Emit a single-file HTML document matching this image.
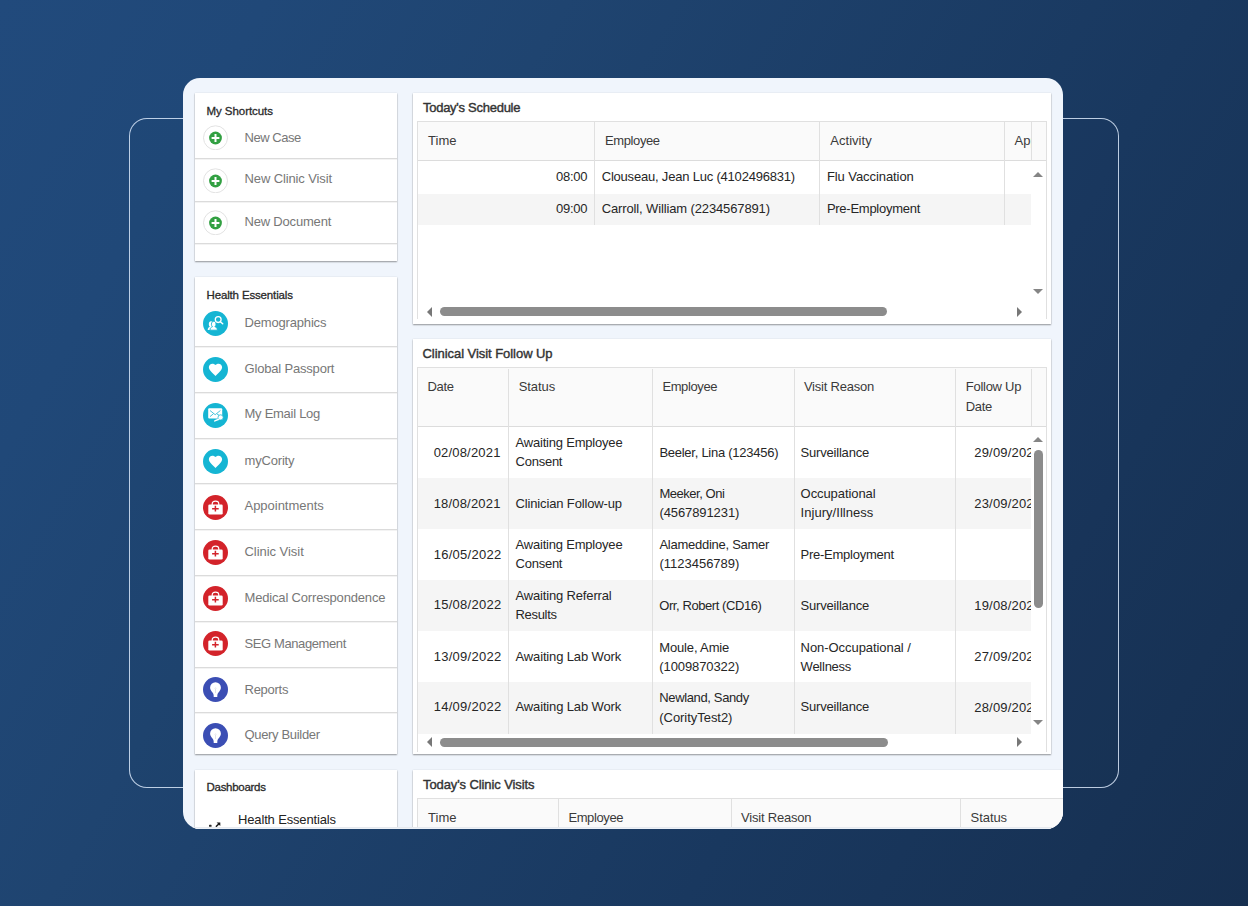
<!DOCTYPE html>
<html lang="en">
<head>
<meta charset="utf-8">
<title>Health Essentials Dashboard</title>
<style>
*{box-sizing:border-box;margin:0;padding:0}
html,body{width:1248px;height:906px;overflow:hidden}
body{position:relative;font-family:"Liberation Sans",sans-serif;font-size:13px;color:#2b2b2b;
background:linear-gradient(120deg,#214a7c 0%,#204878 15%,#1f4470 32%,#19385f 68%,#162f50 100%);}
.frame{position:absolute;left:128.8px;top:118.2px;width:990.2px;height:669.5px;border:1.4px solid rgba(225,238,255,.82);border-radius:18px;background:rgba(20,40,80,.04)}
.card{position:absolute;left:0;top:0;width:1248px;height:906px;clip-path:inset(78px 185px 77px 183px round 17px);}
.cardbg{position:absolute;left:183px;top:78px;width:880px;height:751px;background:#f0f5fc}
.panel{position:absolute;background:#fff;box-shadow:0 1px 1.5px rgba(0,0,0,.38),0 0 1.5px rgba(0,0,0,.1)}
.t{position:absolute;white-space:nowrap;line-height:16px;height:16px}
.h{font-size:11.5px;color:#2a2a2a;-webkit-text-stroke:.3px #2a2a2a}
.pt{font-size:13px;color:#333;-webkit-text-stroke:.4px #333}
.it{color:#777;font-size:13px}
.sep{position:absolute;left:195px;width:202px;height:1px;background:#dbdbdb;box-shadow:0 1px 0 #f3f3f3}
.ic{position:absolute;left:203px;width:25px;height:25px}
.grid{position:absolute;background:#fff;border:1px solid #e0e0e0;border-bottom:none}
.gh{position:absolute;background:#fafafa}
.hl{position:absolute;height:1px;background:#dcdcdc}
.vl{position:absolute;width:1px;background:#e0e0e0}
.row{position:absolute;background:#f5f5f5}
.c{color:#262626;font-size:13px}
.hd{color:#3a3a3a;font-size:13px}
.clip{position:absolute;overflow:hidden}
.thumb{position:absolute;background:#8c8c8c;border-radius:5px}
.ar{position:absolute;width:0;height:0;border:5px solid transparent}
</style>
</head>
<body>
<div class="frame"></div>
<div class="card">
<div class="cardbg"></div>

<!-- ================= My Shortcuts ================= -->
<div class="panel" style="left:195px;top:93px;width:202px;height:168px"></div>
<div class="t h" style="left:206.5px;top:102.5px;letter-spacing:-0.06px">My Shortcuts</div>
<div class="sep" style="top:157.75px"></div>
<div class="sep" style="top:201px"></div>
<div class="sep" style="top:242.75px"></div>
<svg class="ic" style="top:125px" viewBox="0 0 25 25"><circle cx="12.5" cy="12.8" r="12" fill="#fff" stroke="#e2e2e2" stroke-width="1"/><circle cx="12.5" cy="13" r="6.4" fill="#32a042"/><path d="M8.6 13h7.8M12.5 9.1v7.8" stroke="#fff" stroke-width="2" fill="none"/></svg>
<svg class="ic" style="top:167.5px" viewBox="0 0 25 25"><circle cx="12.5" cy="12.8" r="12" fill="#fff" stroke="#e2e2e2" stroke-width="1"/><circle cx="12.5" cy="13" r="6.4" fill="#32a042"/><path d="M8.6 13h7.8M12.5 9.1v7.8" stroke="#fff" stroke-width="2" fill="none"/></svg>
<svg class="ic" style="top:210px" viewBox="0 0 25 25"><circle cx="12.5" cy="12.8" r="12" fill="#fff" stroke="#e2e2e2" stroke-width="1"/><circle cx="12.5" cy="13" r="6.4" fill="#32a042"/><path d="M8.6 13h7.8M12.5 9.1v7.8" stroke="#fff" stroke-width="2" fill="none"/></svg>
<div class="t it" style="left:244.5px;top:129.75px;letter-spacing:-0.46px">New Case</div>
<div class="t it" style="left:244.5px;top:171px;letter-spacing:-0.12px">New Clinic Visit</div>
<div class="t it" style="left:244.5px;top:214px;letter-spacing:-0.19px">New Document</div>

<!-- ================= Health Essentials ================= -->
<div class="panel" style="left:195px;top:277px;width:202px;height:476.5px"></div>
<div class="t h" style="left:206.5px;top:287px;letter-spacing:-0.15px">Health Essentials</div>
<div class="sep" style="top:345.75px"></div>
<div class="sep" style="top:392px"></div>
<div class="sep" style="top:437.5px"></div>
<div class="sep" style="top:482.75px"></div>
<div class="sep" style="top:528.75px"></div>
<div class="sep" style="top:575px"></div>
<div class="sep" style="top:620.75px"></div>
<div class="sep" style="top:666.5px"></div>
<div class="sep" style="top:711.5px"></div>

<!-- Demographics icon -->
<svg class="ic" style="top:311px" viewBox="0 0 25 25"><circle cx="12.5" cy="12.5" r="12.5" fill="#15b5d3"/>
<path d="M4.700 19c0-2.100 1-2.900 2.100-3.300-.6-.6-1-1.500-1-2.500 0-1.700.9-2.900 2.200-2.900s2.200 1.200 2.200 2.900v5.800z" fill="#fff"/>
<path d="M7 19.200c0-2.400 1.300-3.100 2.500-3.500-.7-.6-1.100-1.500-1.100-2.500 0-1.700 1-2.900 2.300-2.900s2.300 1.200 2.300 2.900c0 1-.4 1.900-1.100 2.500 1.200.4 2.500 1.100 2.500 3.500z" fill="#fff" stroke="#15b5d3" stroke-width=".9"/>
<circle cx="15.200" cy="8.600" r="2.900" fill="none" stroke="#fff" stroke-width="1.300"/><path d="M17.300 10.700l2.400 2.100" stroke="#fff" stroke-width="1.500" stroke-linecap="round"/></svg>
<!-- Global Passport icon -->
<svg class="ic" style="top:357px" viewBox="0 0 25 25"><circle cx="12.5" cy="12.5" r="12.5" fill="#15b5d3"/><path transform="translate(4.500 4.700) scale(.665)" d="M12 21.350l-1.450-1.320C5.400 15.360 2 12.280 2 8.500 2 5.420 4.420 3 7.500 3c1.740 0 3.410.81 4.500 2.090C13.090 3.810 14.760 3 16.500 3 19.580 3 22 5.420 22 8.500c0 3.780-3.400 6.860-8.550 11.540L12 21.350z" fill="#fff"/></svg>
<!-- My Email Log icon -->
<svg class="ic" style="top:402.500px" viewBox="0 0 25 25"><circle cx="12.5" cy="12.5" r="12.5" fill="#15b5d3"/><rect x="5.200" y="5.300" width="14" height="10.200" rx="1" fill="#fff"/><path d="M7 7.500l5.200 4.200 5.200-4.200M7 13.600l3.400-2.800M14 11l2.500 1.500" stroke="#15b5d3" stroke-width=".8" fill="none"/><circle cx="17.600" cy="14.400" r="2.600" fill="#fff" stroke="#15b5d3" stroke-width=".8"/><path d="M15.800 16.300l-4 1.600" stroke="#fff" stroke-width="1.500" stroke-linecap="round"/></svg>
<!-- myCority icon -->
<svg class="ic" style="top:448.500px" viewBox="0 0 25 25"><circle cx="12.5" cy="12.5" r="12.5" fill="#15b5d3"/><path transform="translate(4.500 4.700) scale(.665)" d="M12 21.350l-1.450-1.320C5.400 15.360 2 12.280 2 8.500 2 5.420 4.420 3 7.500 3c1.740 0 3.410.81 4.500 2.090C13.090 3.810 14.760 3 16.500 3 19.580 3 22 5.420 22 8.500c0 3.780-3.400 6.860-8.550 11.540L12 21.350z" fill="#fff"/></svg>
<!-- medical bag icons -->
<svg class="ic" style="top:494.500px" viewBox="0 0 25 25"><circle cx="12.5" cy="12.5" r="12.5" fill="#d3232a"/><path d="M9.200 10v-1a3.300 2.900 0 0 1 6.600 0v1" fill="none" stroke="#fff" stroke-width="1.200"/><rect x="5.300" y="9.400" width="14.400" height="10.100" rx="1.300" fill="#fff"/><path d="M9.100 13.700h6.600M12.400 10.800v5.800" stroke="#d3232a" stroke-width="1.500"/></svg>
<svg class="ic" style="top:539.500px" viewBox="0 0 25 25"><circle cx="12.5" cy="12.5" r="12.5" fill="#d3232a"/><path d="M9.200 10v-1a3.300 2.900 0 0 1 6.600 0v1" fill="none" stroke="#fff" stroke-width="1.200"/><rect x="5.300" y="9.400" width="14.400" height="10.100" rx="1.300" fill="#fff"/><path d="M9.100 13.700h6.600M12.400 10.800v5.800" stroke="#d3232a" stroke-width="1.500"/></svg>
<svg class="ic" style="top:585.500px" viewBox="0 0 25 25"><circle cx="12.5" cy="12.5" r="12.5" fill="#d3232a"/><path d="M9.200 10v-1a3.300 2.900 0 0 1 6.600 0v1" fill="none" stroke="#fff" stroke-width="1.200"/><rect x="5.300" y="9.400" width="14.400" height="10.100" rx="1.300" fill="#fff"/><path d="M9.100 13.700h6.600M12.400 10.800v5.800" stroke="#d3232a" stroke-width="1.500"/></svg>
<svg class="ic" style="top:631px" viewBox="0 0 25 25"><circle cx="12.5" cy="12.5" r="12.5" fill="#d3232a"/><path d="M9.200 10v-1a3.300 2.900 0 0 1 6.600 0v1" fill="none" stroke="#fff" stroke-width="1.200"/><rect x="5.300" y="9.400" width="14.400" height="10.100" rx="1.300" fill="#fff"/><path d="M9.100 13.700h6.600M12.400 10.800v5.800" stroke="#d3232a" stroke-width="1.500"/></svg>
<!-- bulb icons -->
<svg class="ic" style="top:677px" viewBox="0 0 25 25"><circle cx="12.5" cy="12.5" r="12.500" fill="#3b4eb4"/><path d="M12.500 5.200a5.400 5.400 0 0 1 5.400 5.400c0 2-1.100 3.400-2.200 4.700-.8.900-1.400 2.200-1.400 3.400v1.200h-3.600v-1.200c0-1.200-.6-2.500-1.400-3.400-1.100-1.300-2.200-2.700-2.200-4.700a5.400 5.400 0 0 1 5.400-5.400z" fill="#fff"/><path d="M11.600 11.500c.3-.7 1.500-.7 1.800 0M12.500 12v4" stroke="#d5d5dd" stroke-width=".7" fill="none"/></svg>
<svg class="ic" style="top:723px" viewBox="0 0 25 25"><circle cx="12.5" cy="12.5" r="12.500" fill="#3b4eb4"/><path d="M12.500 5.200a5.400 5.400 0 0 1 5.400 5.400c0 2-1.100 3.400-2.200 4.700-.8.900-1.400 2.200-1.400 3.400v1.200h-3.600v-1.200c0-1.200-.6-2.500-1.400-3.400-1.100-1.300-2.200-2.700-2.200-4.700a5.400 5.400 0 0 1 5.400-5.400z" fill="#fff"/><path d="M11.600 11.500c.3-.7 1.500-.7 1.800 0M12.500 12v4" stroke="#d5d5dd" stroke-width=".7" fill="none"/></svg>

<div class="t it" style="left:244.5px;top:314.5px;letter-spacing:-0.17px">Demographics</div>
<div class="t it" style="left:244.5px;top:360.5px;letter-spacing:-0.18px">Global Passport</div>
<div class="t it" style="left:244.5px;top:406.25px;letter-spacing:-0.27px">My Email Log</div>
<div class="t it" style="left:244.5px;top:452.5px;letter-spacing:-0.18px">myCority</div>
<div class="t it" style="left:244.5px;top:497.5px;letter-spacing:-0.02px">Appointments</div>
<div class="t it" style="left:244.5px;top:543.75px;letter-spacing:-0.04px">Clinic Visit</div>
<div class="t it" style="left:244.5px;top:589.5px;letter-spacing:-0.17px">Medical Correspondence</div>
<div class="t it" style="left:244.5px;top:635.5px;letter-spacing:-0.40px">SEG Management</div>
<div class="t it" style="left:244.5px;top:681.75px;letter-spacing:-0.26px">Reports</div>
<div class="t it" style="left:244.5px;top:726.75px;letter-spacing:-0.33px">Query Builder</div>

<!-- ================= Dashboards ================= -->
<div class="panel" style="left:195px;top:769.5px;width:202px;height:100px"></div>
<div class="t h" style="left:206.5px;top:779.25px;letter-spacing:-0.28px">Dashboards</div>
<div class="t" style="left:238px;top:812.25px;color:#222;font-size:13px;letter-spacing:-0.15px">Health Essentials</div>
<svg style="position:absolute;left:208px;top:820px;width:14px;height:8px" viewBox="0 0 14 8"><path d="M8.6 2.400h3.700v3.700z" fill="#1a1a1a"/><path d="M11.500 3.200l-3.600 3.600" stroke="#1a1a1a" stroke-width="1.500" fill="none"/><rect x="1" y="4.800" width="2.600" height="2" rx=".6" fill="#2a2a2a"/></svg>

<!-- ================= Today's Schedule ================= -->
<div class="panel" style="left:412.5px;top:93px;width:638.5px;height:230.500px"></div>
<div class="t pt" style="left:423px;top:100px;letter-spacing:-0.27px">Today's Schedule</div>
<div class="grid" style="left:417px;top:121px;width:629.5px;height:198px"></div>
<div class="gh" style="left:418px;top:122px;width:627.500px;height:38.500px"></div>
<div class="hl" style="left:418px;top:160px;width:627.500px"></div>
<div class="row" style="left:418px;top:193.500px;width:613px;height:31.500px"></div>
<div class="vl" style="left:594px;top:122px;height:103px"></div>
<div class="vl" style="left:819px;top:122px;height:103px"></div>
<div class="vl" style="left:1004px;top:122px;height:103px"></div>
<div class="vl" style="left:1030.500px;top:122px;height:38px"></div>
<div class="t hd" style="left:428px;top:132.750px;letter-spacing:0.03px">Time</div>
<div class="t hd" style="left:605px;top:132.750px;letter-spacing:-0.39px">Employee</div>
<div class="t hd" style="left:830.300px;top:132.750px;letter-spacing:0.03px">Activity</div>
<div class="clip" style="left:1005px;top:122px;width:25.500px;height:38px"><div class="t hd" style="left:9.500px;top:10.750px">Approved</div></div>
<div class="t c" style="left:556px;top:169px;letter-spacing:-0.24px">08:00</div>
<div class="t c" style="left:556px;top:200.750px;letter-spacing:-0.24px">09:00</div>
<div class="t c" style="left:601.700px;top:169px;letter-spacing:-0.20px">Clouseau, Jean Luc (4102496831)</div>
<div class="t c" style="left:601.700px;top:200.750px;letter-spacing:-0.13px">Carroll, William (2234567891)</div>
<div class="t c" style="left:826.900px;top:169px;letter-spacing:-0.07px">Flu Vaccination</div>
<div class="t c" style="left:826.900px;top:200.750px;letter-spacing:-0.26px">Pre-Employment</div>
<!-- scrollbars -->
<div class="ar" style="left:1033px;top:172px;border-bottom:5px solid #858585;border-top-width:0"></div>
<div class="ar" style="left:1033px;top:289px;border-top:5px solid #858585;border-bottom-width:0"></div>
<div class="ar" style="left:426.500px;top:306.500px;border-right:5px solid #777;border-left-width:0"></div>
<div class="ar" style="left:1016.500px;top:306.500px;border-left:5px solid #777;border-right-width:0"></div>
<div class="thumb" style="left:440px;top:307px;width:447px;height:9px"></div>

<!-- ================= Clinical Visit Follow Up ================= -->
<div class="panel" style="left:412.5px;top:339px;width:638.5px;height:415px"></div>
<div class="t pt" style="left:422.500px;top:345.500px;letter-spacing:-0.05px">Clinical Visit Follow Up</div>
<div class="grid" style="left:417px;top:367px;width:629.5px;height:385px"></div>
<div class="gh" style="left:418px;top:368px;width:627.500px;height:58px"></div>
<div class="hl" style="left:418px;top:425.500px;width:627.500px;height:1.500px"></div>
<div class="row" style="left:418px;top:478px;width:613px;height:51px"></div>
<div class="row" style="left:418px;top:580px;width:613px;height:51px"></div>
<div class="row" style="left:418px;top:682px;width:613px;height:51.500px"></div>
<div class="vl" style="left:507.500px;top:368.500px;height:365px"></div>
<div class="vl" style="left:651.500px;top:368.500px;height:365px"></div>
<div class="vl" style="left:793.500px;top:368.500px;height:365px"></div>
<div class="vl" style="left:955.200px;top:368.500px;height:365px"></div>
<div class="vl" style="left:1030.700px;top:368.500px;height:57px"></div>
<div class="t hd" style="left:427.500px;top:379.1px;letter-spacing:-0.32px">Date</div>
<div class="t hd" style="left:518.700px;top:379.1px;letter-spacing:-0.07px">Status</div>
<div class="t hd" style="left:662.400px;top:379.1px;letter-spacing:-0.39px">Employee</div>
<div class="t hd" style="left:803.900px;top:379.1px;letter-spacing:-0.21px">Visit Reason</div>
<div class="t hd" style="left:965.800px;top:379.1px;letter-spacing:-0.27px">Follow Up</div>
<div class="t hd" style="left:965.800px;top:399.1px;letter-spacing:-0.32px">Date</div>

<!-- row 1 -->
<div class="t c" style="left:433.700px;top:444.500px;letter-spacing:0.18px">02/08/2021</div>
<div class="t c" style="left:515.500px;top:435px;letter-spacing:-0.20px">Awaiting Employee</div>
<div class="t c" style="left:515.500px;top:453.500px;letter-spacing:-0.24px">Consent</div>
<div class="t c" style="left:659.400px;top:444.500px;letter-spacing:-0.26px">Beeler, Lina (123456)</div>
<div class="t c" style="left:800.600px;top:444.500px;letter-spacing:-0.20px">Surveillance</div>
<div class="clip" style="left:956px;top:427px;width:75px;height:51px"><div class="t c" style="left:18.300px;top:17.500px;letter-spacing:0.18px">29/09/2022</div></div>
<!-- row 2 -->
<div class="t c" style="left:433.700px;top:495.500px;letter-spacing:0.18px">18/08/2021</div>
<div class="t c" style="left:515.500px;top:495.500px;letter-spacing:-0.14px">Clinician Follow-up</div>
<div class="t c" style="left:659.400px;top:485.500px;letter-spacing:-0.46px">Meeker, Oni</div>
<div class="t c" style="left:659.400px;top:504.500px;letter-spacing:-0.09px">(4567891231)</div>
<div class="t c" style="left:800.600px;top:485.500px;letter-spacing:-0.08px">Occupational</div>
<div class="t c" style="left:800.600px;top:504.500px;letter-spacing:0.04px">Injury/Illness</div>
<div class="clip" style="left:956px;top:478px;width:75px;height:51px"><div class="t c" style="left:18.300px;top:17.500px;letter-spacing:0.18px">23/09/2022</div></div>
<!-- row 3 -->
<div class="t c" style="left:433.700px;top:546.75px;letter-spacing:0.27px">16/05/2022</div>
<div class="t c" style="left:515.500px;top:537px;letter-spacing:-0.20px">Awaiting Employee</div>
<div class="t c" style="left:515.500px;top:555.750px;letter-spacing:-0.24px">Consent</div>
<div class="t c" style="left:659.400px;top:537px;letter-spacing:-0.26px">Alameddine, Samer</div>
<div class="t c" style="left:659.400px;top:555.750px;letter-spacing:0.00px">(1123456789)</div>
<div class="t c" style="left:800.600px;top:546.75px;letter-spacing:-0.26px">Pre-Employment</div>
<!-- row 4 -->
<div class="t c" style="left:433.700px;top:597.4px;letter-spacing:0.27px">15/08/2022</div>
<div class="t c" style="left:515.500px;top:587.500px;letter-spacing:-0.16px">Awaiting Referral</div>
<div class="t c" style="left:515.500px;top:607px;letter-spacing:-0.31px">Results</div>
<div class="t c" style="left:659.250px;top:597.500px;letter-spacing:-0.42px">Orr, Robert (CD16)</div>
<div class="t c" style="left:800.600px;top:597.500px;letter-spacing:-0.20px">Surveillance</div>
<div class="clip" style="left:956px;top:580px;width:75px;height:51px"><div class="t c" style="left:18.300px;top:17.500px;letter-spacing:0.18px">19/08/2022</div></div>
<!-- row 5 -->
<div class="t c" style="left:433.700px;top:648.6px;letter-spacing:0.27px">13/09/2022</div>
<div class="t c" style="left:515.500px;top:648.6px;letter-spacing:-0.14px">Awaiting Lab Work</div>
<div class="t c" style="left:659.250px;top:639.6px;letter-spacing:-0.15px">Moule, Amie</div>
<div class="t c" style="left:659.250px;top:659.1px;letter-spacing:-0.09px">(1009870322)</div>
<div class="t c" style="left:800.600px;top:639.6px;letter-spacing:-0.06px">Non-Occupational /</div>
<div class="t c" style="left:800.600px;top:659.1px;letter-spacing:-0.25px">Wellness</div>
<div class="clip" style="left:956px;top:631px;width:75px;height:51px"><div class="t c" style="left:18.300px;top:17.500px;letter-spacing:0.18px">27/09/2022</div></div>
<!-- row 6 -->
<div class="t c" style="left:433.700px;top:699px;letter-spacing:0.27px">14/09/2022</div>
<div class="t c" style="left:515.500px;top:698.750px;letter-spacing:-0.14px">Awaiting Lab Work</div>
<div class="t c" style="left:659.250px;top:690px;letter-spacing:-0.36px">Newland, Sandy</div>
<div class="t c" style="left:659.250px;top:709.500px;letter-spacing:-0.04px">(CorityTest2)</div>
<div class="t c" style="left:800.600px;top:698.750px;letter-spacing:-0.20px">Surveillance</div>
<div class="clip" style="left:956px;top:682px;width:75px;height:51px"><div class="t c" style="left:18.300px;top:17.500px;letter-spacing:0.18px">28/09/2022</div></div>
<!-- scrollbars -->
<div class="ar" style="left:1033px;top:437px;border-bottom:5px solid #858585;border-top-width:0"></div>
<div class="ar" style="left:1033px;top:719.500px;border-top:5px solid #858585;border-bottom-width:0"></div>
<div class="thumb" style="left:1034px;top:450px;width:8.500px;height:157.500px"></div>
<div class="ar" style="left:426.500px;top:737px;border-right:5px solid #777;border-left-width:0"></div>
<div class="ar" style="left:1016.500px;top:737px;border-left:5px solid #777;border-right-width:0"></div>
<div class="thumb" style="left:440px;top:738px;width:447.500px;height:8.500px"></div>

<!-- ================= Today's Clinic Visits ================= -->
<div class="panel" style="left:412.5px;top:769.500px;width:700px;height:100px"></div>
<div class="t pt" style="left:423px;top:776.750px;letter-spacing:-0.10px">Today's Clinic Visits</div>
<div class="grid" style="left:417px;top:798px;width:700px;height:60px;background:#fafafa"></div>
<div class="vl" style="left:557.500px;top:799px;height:40px"></div>
<div class="vl" style="left:730.800px;top:799px;height:40px"></div>
<div class="vl" style="left:960.200px;top:799px;height:40px"></div>
<div class="t hd" style="left:428px;top:810px;letter-spacing:0.03px">Time</div>
<div class="t hd" style="left:568.400px;top:810px;letter-spacing:-0.39px">Employee</div>
<div class="t hd" style="left:741.100px;top:810px;letter-spacing:-0.21px">Visit Reason</div>
<div class="t hd" style="left:970.600px;top:810px;letter-spacing:-0.07px">Status</div>

<div style="position:absolute;left:183px;top:827px;width:880px;height:2px;background:linear-gradient(#e3e5e9,#f0f5fc)"></div>
</div>
</body>
</html>
